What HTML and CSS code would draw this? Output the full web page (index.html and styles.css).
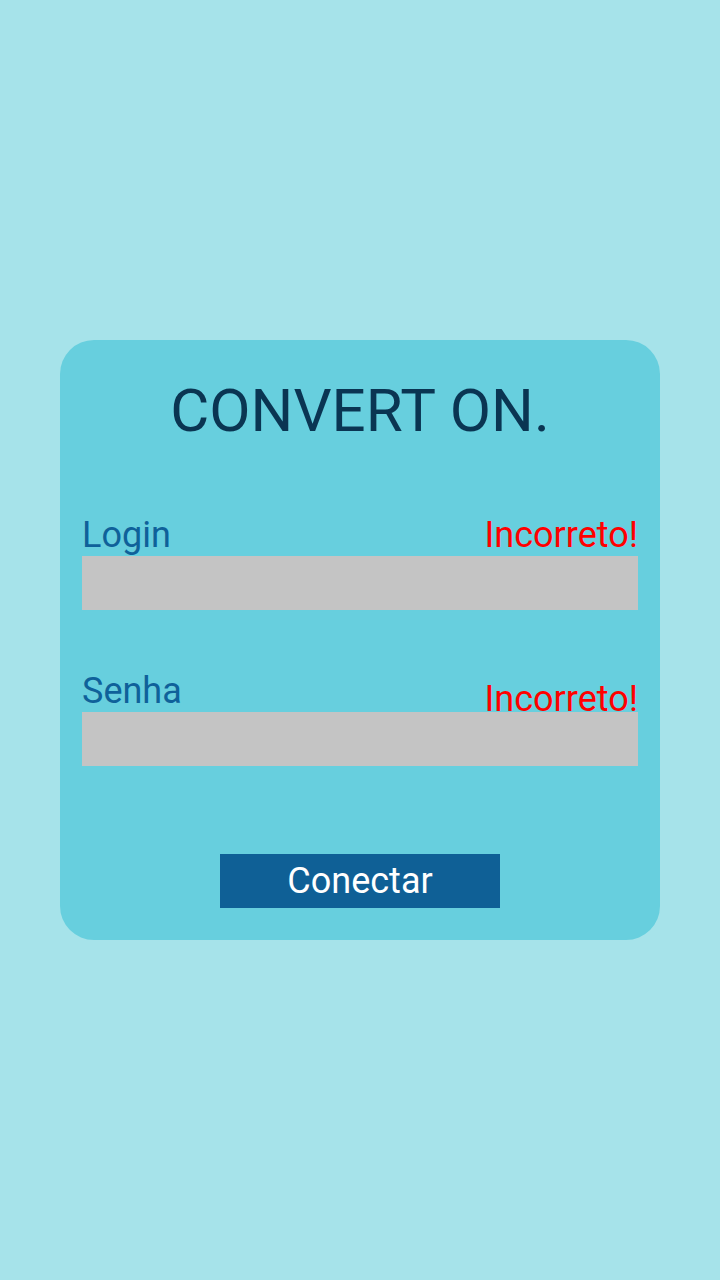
FILE: index.html
```html
<!DOCTYPE html>
<html lang="pt">
<head>
<meta charset="utf-8">
<title>Convert On</title>
<link rel="stylesheet" href="styles.css">
</head>
<body>
  <main class="card">
    <h1 class="title">CONVERT ON.</h1>
    <div class="field field-login">
      <div class="field-head">
        <label class="label" for="login">Login</label>
        <span class="error">Incorreto!</span>
      </div>
      <input class="input" id="login" type="text">
    </div>
    <div class="field field-senha">
      <div class="field-head">
        <label class="label" for="senha">Senha</label>
        <span class="error error-low">Incorreto!</span>
      </div>
      <input class="input" id="senha" type="password">
    </div>
    <button class="btn" type="button">Conectar</button>
  </main>
</body>
</html>
```

FILE: styles.css
```css
html, body {
  margin: 0;
  padding: 0;
}
body {
  width: 720px;
  height: 1280px;
  background: #a6e3ea;
  display: flex;
  align-items: center;
  justify-content: center;
  font-family: Roboto, "Liberation Sans", sans-serif;
}
.card {
  box-sizing: border-box;
  width: 600px;
  height: 600px;
  background: #67cfde;
  border-radius: 34px;
  padding: 35px 22px 32px;
  display: flex;
  flex-direction: column;
}
.title {
  margin: 0;
  font-size: 60px;
  font-weight: 400;
  line-height: 72px;
  color: #0a3552;
  text-align: center;
}
.field-login {
  margin-top: 67px;
}
.field-senha {
  margin-top: 60px;
}
.field-head {
  display: flex;
  justify-content: space-between;
  align-items: flex-end;
  height: 42px;
}
.label {
  font-size: 36px;
  line-height: 42px;
  color: #0f619a;
}
.error {
  font-size: 36px;
  line-height: 42px;
  color: #ff0000;
}
.error-low {
  margin-bottom: -8px;
}
.input {
  display: block;
  box-sizing: border-box;
  width: 100%;
  height: 54px;
  margin: 0;
  border: 0;
  padding: 0;
  background: #c4c4c4;
  outline: none;
}
.btn {
  align-self: center;
  margin-top: 88px;
  width: 280px;
  height: 54px;
  border: 0;
  padding: 0;
  background: #0f6096;
  color: #ffffff;
  font-family: Roboto, "Liberation Sans", sans-serif;
  font-size: 36px;
  line-height: 54px;
}
```
